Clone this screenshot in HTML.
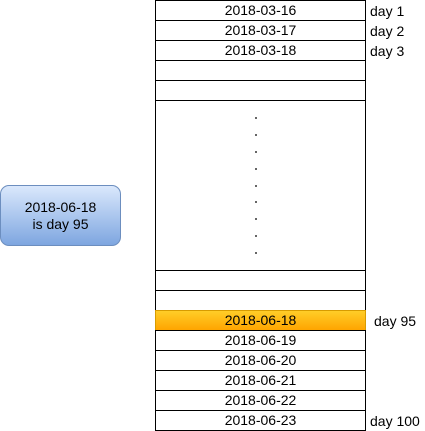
<!DOCTYPE html>
<html><head><meta charset="utf-8"><style>
html,body{margin:0;padding:0;background:#fff;width:425px;height:431px;overflow:hidden;position:relative}
div{position:absolute;box-sizing:border-box;font-family:"Liberation Sans",sans-serif;font-size:14px;color:#000}
.r{left:155px;width:211px;height:21px;border:1px solid #000;background:#fff;text-align:center;line-height:19px}
.l{left:370px;line-height:20px;height:20px}
.d{left:255px;width:2px;height:2px;background:#666}
</style></head><body>
<div style="left:0;top:185px;width:121px;height:61px;border:1px solid #6c8ebf;border-radius:9px;background:linear-gradient(#dae8fc,#7ea6e0);text-align:center;line-height:17px;padding-top:13px">2018-06-18<br>is day 95</div>
<div class="r" style="top:0">2018-03-16</div>
<div class="r" style="top:20px">2018-03-17</div>
<div class="r" style="top:40px">2018-03-18</div>
<div class="r" style="top:60px"></div>
<div class="r" style="top:80px"></div>
<div class="r" style="top:100px;height:171px"></div>
<div class="r" style="top:270px"></div>
<div class="r" style="top:290px"></div>
<div class="r" style="top:310px;border-color:#d79b00;background:linear-gradient(#ffcd28,#ffa500)">2018-06-18</div>
<div class="r" style="top:330px">2018-06-19</div>
<div class="r" style="top:350px">2018-06-20</div>
<div class="r" style="top:370px">2018-06-21</div>
<div class="r" style="top:390px">2018-06-22</div>
<div class="r" style="top:410px">2018-06-23</div>
<div class="d" style="top:117px"></div><div class="d" style="top:134px"></div><div class="d" style="top:151px"></div><div class="d" style="top:168px"></div><div class="d" style="top:185px"></div><div class="d" style="top:201px"></div><div class="d" style="top:218px"></div><div class="d" style="top:235px"></div><div class="d" style="top:252px"></div>
<div class="l" style="top:1px">day 1</div>
<div class="l" style="top:21px">day 2</div>
<div class="l" style="top:41px">day 3</div>
<div class="l" style="top:311px;left:374px">day 95</div>
<div class="l" style="top:411px">day 100</div>
</body></html>
